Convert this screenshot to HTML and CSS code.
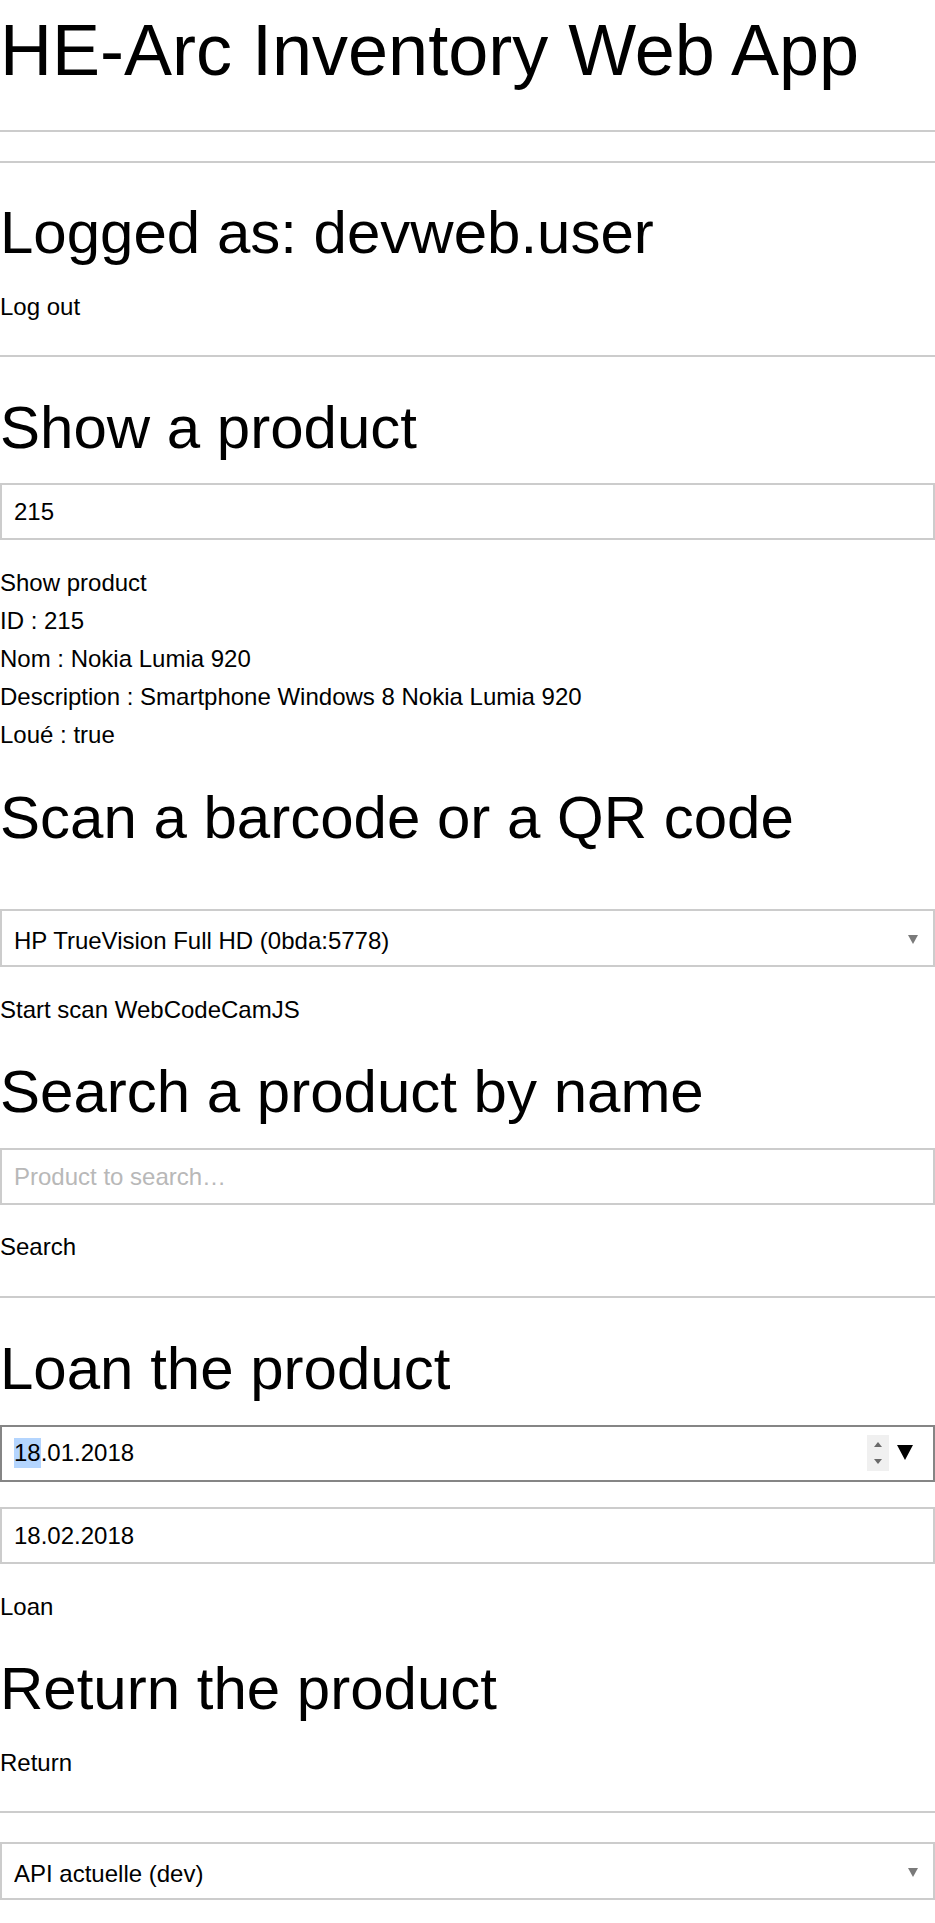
FILE: index.html
```html
<!DOCTYPE html>
<html lang="en">
<head>
<meta charset="utf-8">
<title>HE-Arc Inventory Web App</title>
<link rel="stylesheet" href="styles.css">
</head>
<body>
<main class="app">
  <h1 class="app-title">HE-Arc Inventory Web App</h1>
  <hr class="rule rule-first">
  <hr class="rule rule-second">

  <section class="block">
    <h2 class="heading heading-logged">Logged as: devweb.user</h2>
    <div class="action action-logout">Log out</div>
  </section>
  <hr class="rule rule-after-logout">

  <section class="block">
    <h2 class="heading heading-show">Show a product</h2>
    <input class="field field-id" type="text" value="215">
    <div class="product-info">
      <div class="line">Show product</div>
      <div class="line">ID : 215</div>
      <div class="line">Nom : Nokia Lumia 920</div>
      <div class="line">Description : Smartphone Windows 8 Nokia Lumia 920</div>
      <div class="line">Loué : true</div>
    </div>
  </section>

  <section class="block">
    <h2 class="heading heading-scan">Scan a barcode or a QR code</h2>
    <div class="select-wrap select-camera">
      <select class="select">
        <option>HP TrueVision Full HD (0bda:5778)</option>
      </select>
    </div>
    <div class="action action-scan">Start scan WebCodeCamJS</div>
  </section>

  <section class="block">
    <h2 class="heading heading-search">Search a product by name</h2>
    <input class="field field-search" type="text" placeholder="Product to search…">
    <div class="action action-search">Search</div>
  </section>
  <hr class="rule rule-after-search">

  <section class="block">
    <h2 class="heading heading-loan">Loan the product</h2>
    <div class="date-field date-focused">
      <span class="date-text"><span class="date-seg-selected">18</span>.01.2018</span>
      <span class="spinner"><span class="spin-up"></span><span class="spin-down"></span></span>
      <span class="drop-arrow"></span>
    </div>
    <input class="field field-date2" type="text" value="18.02.2018">
    <div class="action action-loan">Loan</div>
  </section>

  <section class="block">
    <h2 class="heading heading-return">Return the product</h2>
    <div class="action action-return">Return</div>
  </section>
  <hr class="rule rule-after-return">

  <div class="select-wrap select-api">
    <select class="select">
      <option>API actuelle (dev)</option>
    </select>
  </div>
</main>
</body>
</html>
```
FILE: styles.css
```css
html, body {
  margin: 0;
  padding: 0;
  background: #ffffff;
}

body {
  font-family: "Liberation Sans", Arial, sans-serif;
  font-size: 24px;
  color: #000000;
}

.app {
  display: flow-root;
  padding-bottom: 23px;
}

.app-title {
  margin: 11px 0 0;
  font-size: 72px;
  font-weight: normal;
  line-height: 79px;
}

.rule {
  height: 0;
  margin: 0;
  border: 0;
  border-top: 2px solid #cccccc;
}

.rule-first { margin-top: 40px; }
.rule-second { margin-top: 29px; }
.rule-after-logout { margin-top: 29px; }
.rule-after-search { margin-top: 29.5px; }
.rule-after-return { margin-top: 29px; }

.block {
  display: flow-root;
}

.heading {
  margin: 0;
  font-size: 60px;
  font-weight: normal;
  line-height: 66px;
}

.heading-logged { margin-top: 37px; }
.heading-show { margin-top: 38px; }
.heading-scan { margin-top: 30.5px; }
.heading-search { margin-top: 30.5px; }
.heading-loan { margin-top: 38px; }
.heading-return { margin-top: 30.5px; }

.action,
.line {
  line-height: 38px;
}

.action-logout { margin-top: 22px; }
.action-scan { margin-top: 24px; }
.action-search { margin-top: 23px; }
.action-loan { margin-top: 23.5px; }
.action-return { margin-top: 21.5px; }

.product-info {
  margin-top: 24px;
}

.field {
  display: block;
  box-sizing: border-box;
  width: 100%;
  height: 57px;
  margin: 0;
  padding: 0 12px;
  border: 2px solid #cccccc;
  border-radius: 0;
  background: #ffffff;
  font-family: "Liberation Sans", Arial, sans-serif;
  font-size: 24px;
  color: #000000;
  outline: none;
}

.field::placeholder {
  color: #b8b8b8;
  opacity: 1;
}

.field-id { margin-top: 22px; }
.field-search { margin-top: 23px; }
.field-date2 { margin-top: 25.5px; }

.select-wrap {
  position: relative;
}

.select-camera { margin-top: 58px; }
.select-api { margin-top: 29.5px; }

.select {
  display: block;
  box-sizing: border-box;
  width: 100%;
  height: 58px;
  margin: 0;
  padding: 5px 40px 0 12px;
  border: 2px solid #cccccc;
  border-radius: 0;
  background: #ffffff;
  font-family: "Liberation Sans", Arial, sans-serif;
  font-size: 24px;
  color: #000000;
  -webkit-appearance: none;
  appearance: none;
  outline: none;
}

.select-wrap::after {
  content: "";
  position: absolute;
  right: 17px;
  top: 26px;
  width: 0;
  height: 0;
  border-left: 5px solid transparent;
  border-right: 5px solid transparent;
  border-top: 9px solid #7a7a7a;
  pointer-events: none;
}

.date-field {
  display: flex;
  align-items: center;
  box-sizing: border-box;
  height: 57px;
  margin-top: 23px;
  padding: 0 20px 0 12px;
  border: 2px solid #cccccc;
}

.date-focused {
  border-color: #858585;
}

.date-text {
  flex: 1;
  line-height: 30px;
  margin-top: -1px;
}

.date-seg-selected {
  display: inline-block;
  background: #b4d5fe;
}

.spinner {
  display: flex;
  flex-direction: column;
  align-items: center;
  justify-content: space-between;
  box-sizing: border-box;
  width: 22px;
  height: 36px;
  padding: 7px 0;
  background: #f0f0f0;
}

.spin-up {
  width: 0;
  height: 0;
  border-left: 4px solid transparent;
  border-right: 4px solid transparent;
  border-bottom: 5px solid #6a6a6a;
}

.spin-down {
  width: 0;
  height: 0;
  border-left: 4px solid transparent;
  border-right: 4px solid transparent;
  border-top: 5px solid #6a6a6a;
}

.drop-arrow {
  width: 0;
  height: 0;
  margin-left: 8px;
  margin-top: -2px;
  border-left: 8px solid transparent;
  border-right: 8px solid transparent;
  border-top: 15px solid #000000;
}
```
